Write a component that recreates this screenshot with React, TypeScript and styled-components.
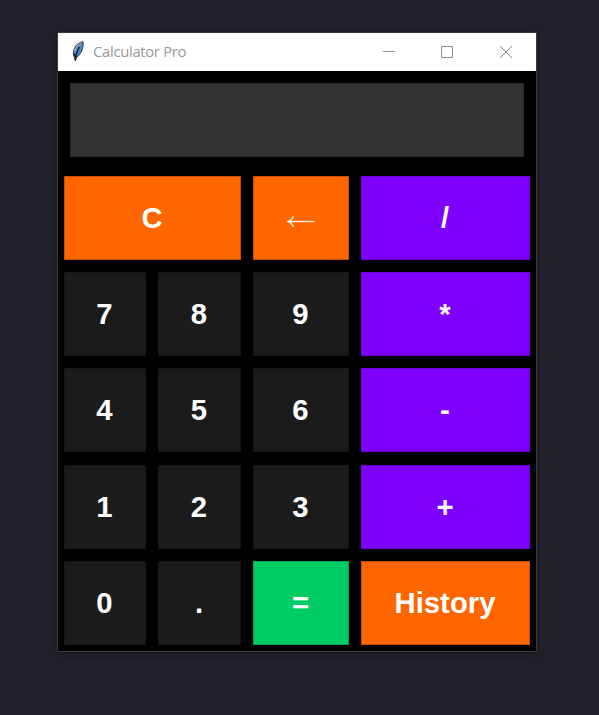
import React from "react";
import styled, { createGlobalStyle } from "styled-components";

const Global = createGlobalStyle`
  * { box-sizing: border-box; }
  html, body { margin: 0; background: #22222d; }
`;

const Desktop = styled.main`
  width: 100%;
  height: 715px;
  padding: 32px 0 0 57px;
  background: #22222d;
  overflow: hidden;
`;

const Window = styled.section`
  width: 480px;
  height: 620px;
  border: 1px solid #38383b;
  background: #000;
  box-shadow: 0 2px 9px rgba(0, 0, 0, 0.32);
`;

const TitleBar = styled.header`
  display: flex;
  align-items: center;
  height: 38px;
  padding-left: 12px;
  background: #fff;
`;

const Title = styled.h1`
  flex: 1;
  margin: 0 0 2px 7px;
  font: 400 14.8px/20px "Open Sans", "Noto Sans", sans-serif;
  letter-spacing: -0.3px;
  color: #999;
  white-space: nowrap;
`;

const Controls = styled.div`
  display: flex;
  height: 38px;
  padding-right: 1px;
`;

const Control = styled.button`
  display: flex;
  align-items: center;
  justify-content: center;
  width: 58.5px;
  height: 38px;
  padding: 0;
  border: 0;
  background: none;
`;

const Display = styled.div`
  height: 74px;
  margin: 12px 12px 19px;
  background: #333;
  border: 1px solid #292929;
`;

const Keypad = styled.div`
  display: grid;
  grid-template-columns: 82px 83px 96px 169px;
  grid-template-rows: repeat(5, 84px);
  gap: 12.2px 12px;
  padding-left: 6px;
`;

const tones = {
  dark: ["#1b1b1b", "#151515"],
  orange: ["#ff6600", "#c24e00"],
  purple: ["#7f00ff", "#6800d1"],
  green: ["#00cc66", "#00a352"],
};

type Tone = keyof typeof tones;

const Key = styled.button<{ $tone: Tone; $wide?: boolean }>`
  grid-column: span ${(p) => (p.$wide ? 2 : 1)};
  display: flex;
  align-items: center;
  justify-content: center;
  padding: 0 1px 0 0;
  border: 1px solid ${(p) => tones[p.$tone][1]};
  background: ${(p) => tones[p.$tone][0]};
  color: #fff;
  font: bold 29.3px/34px "Liberation Sans", Arial, sans-serif;
`;

const ArrowIcon = styled.svg`
  display: block;
  margin-top: 7px;
`;

const Arrow = () => (
  <ArrowIcon width="29" height="13" viewBox="0 0 29 13">
    <path d="M3 6.500H28.500" stroke="#fff" strokeOpacity=".92" strokeWidth="1.300" />
    <path d="M.3 6.500C3.500 5.300 5.700 3.400 6.900 .7L8 1.200C7.300 3.200 6.300 4.900 4.800 6.500C6.300 8 7.300 9.700 8 11.700L6.900 12.200C5.700 9.600 3.500 7.700 .3 6.500Z" fill="#fff" fillOpacity=".92" />
  </ArrowIcon>
);

const keys: { label: string; tone: Tone; wide?: boolean }[] = [
  { label: "C", tone: "orange", wide: true },
  { label: "←", tone: "orange" },
  { label: "/", tone: "purple" },
  { label: "7", tone: "dark" },
  { label: "8", tone: "dark" },
  { label: "9", tone: "dark" },
  { label: "*", tone: "purple" },
  { label: "4", tone: "dark" },
  { label: "5", tone: "dark" },
  { label: "6", tone: "dark" },
  { label: "-", tone: "purple" },
  { label: "1", tone: "dark" },
  { label: "2", tone: "dark" },
  { label: "3", tone: "dark" },
  { label: "+", tone: "purple" },
  { label: "0", tone: "dark" },
  { label: ".", tone: "dark" },
  { label: "=", tone: "green" },
  { label: "History", tone: "orange" },
];

const Feather = () => (
  <svg width="16" height="22" viewBox="0 0 16 22">
    <path d="M12.800 .7C8.800 1.500 5.800 4 4.300 7.700C3.100 10.900 2.900 13.800 4.300 16L5.200 19.500L6.400 16.500C9.700 14.300 11.600 11 12.500 7.700C13.100 5.300 13.400 2.500 12.800 .7Z" fill="#4f86c6" stroke="#35383c" strokeWidth="1" />
    <path d="M11.300 2C7.600 3.800 5.300 6.800 4.500 10.700" fill="none" stroke="#aaa" strokeWidth="1.200" />
    <path d="M9.200 6L7 11L5.300 19.500M4.300 12.500L5.500 16.500" fill="none" stroke="#111c2b" strokeWidth="1.300" />
  </svg>
);

export default function App() {
  return (
    <>
      <Global />
      <Desktop>
        <Window>
          <TitleBar>
            <Feather />
            <Title>Calculator Pro</Title>
            <Controls>
              <Control aria-label="Minimize">
                <svg width="12" height="12" stroke="#919191"><path d="M0 5.500H12" /></svg>
              </Control>
              <Control aria-label="Maximize">
                <svg width="12" height="12" fill="none" stroke="#919191"><path d="M.5 .5H11.500V11.500H.5Z" /></svg>
              </Control>
              <Control aria-label="Close">
                <svg width="12" height="12" stroke="#858585"><path d="M0 0L12 12M12 0L0 12" /></svg>
              </Control>
            </Controls>
          </TitleBar>
          <Display />
          <Keypad>
            {keys.map(({ label, tone, wide }) => (
              <Key key={label} $tone={tone} $wide={wide} aria-label={label === "←" ? "Backspace" : undefined}>
                {label === "←" ? <Arrow /> : label}
              </Key>
            ))}
          </Keypad>
        </Window>
      </Desktop>
    </>
  );
}
